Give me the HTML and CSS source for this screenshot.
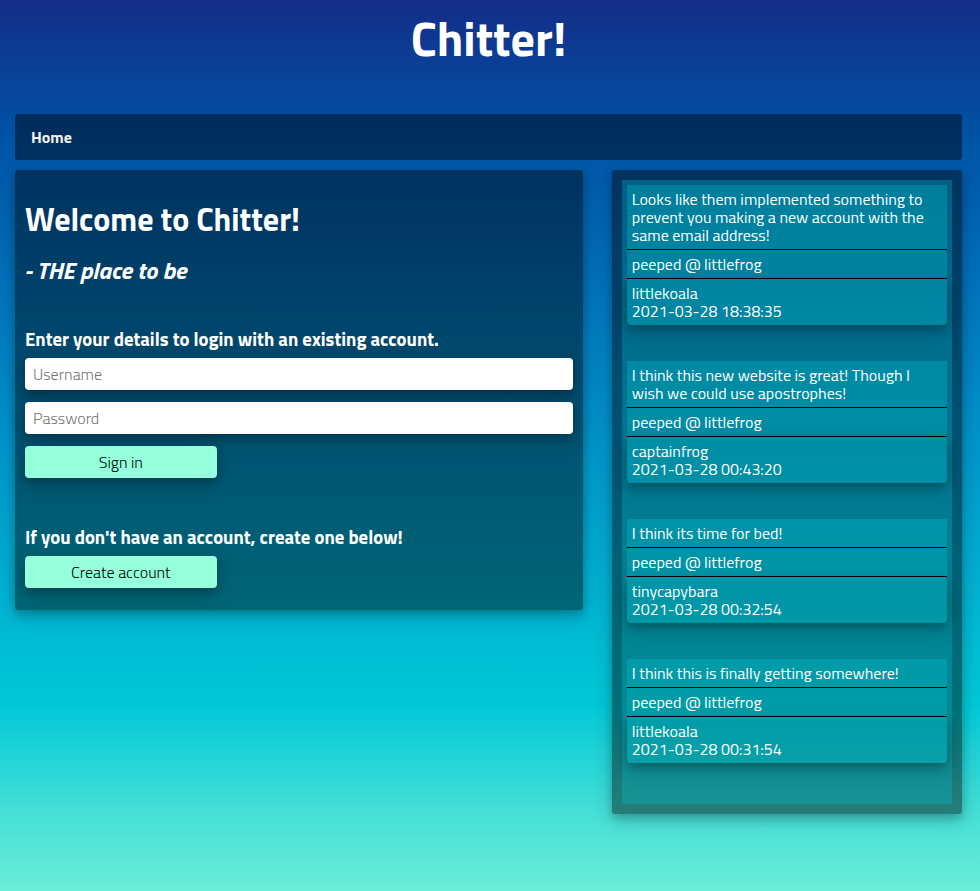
FILE: index.html
```html
<!DOCTYPE html>
<html lang="en">
<head>
<meta charset="utf-8">
<meta name="viewport" content="width=device-width, initial-scale=1">
<title>Chitter!</title>
<link rel="stylesheet" href="styles.css">
</head>
<body>
<header class="banner"><h1>Chitter!</h1></header>
<nav class="navbar"><a href="#">Home</a></nav>
<main class="columns">
  <section class="panel welcome">
    <h2>Welcome to Chitter!</h2>
    <p class="tagline">- THE place to be</p>
    <form class="form">
      <h3>Enter your details to login with an existing account.</h3>
      <input class="field" type="text" placeholder="Username" aria-label="Username">
      <input class="field" type="password" placeholder="Password" aria-label="Password">
      <button class="button" type="submit">Sign in</button>
    </form>
    <form class="form">
      <h3>If you don't have an account, create one below!</h3>
      <button class="button" type="submit">Create account</button>
    </form>
  </section>
  <section class="panel" aria-label="Peeps">
    <div class="feed">
      <article class="peep">
        <p class="cell">Looks like them implemented something to prevent you making a new account with the same email address!</p>
        <p class="cell">peeped @ littlefrog</p>
        <p class="cell meta">littlekoala<br>2021-03-28 18:38:35</p>
      </article>
      <article class="peep">
        <p class="cell">I think this new website is great! Though I wish we could use apostrophes!</p>
        <p class="cell">peeped @ littlefrog</p>
        <p class="cell meta">captainfrog<br>2021-03-28 00:43:20</p>
      </article>
      <article class="peep">
        <p class="cell">I think its time for bed!</p>
        <p class="cell">peeped @ littlefrog</p>
        <p class="cell meta">tinycapybara<br>2021-03-28 00:32:54</p>
      </article>
      <article class="peep">
        <p class="cell">I think this is finally getting somewhere!</p>
        <p class="cell">peeped @ littlefrog</p>
        <p class="cell meta">littlekoala<br>2021-03-28 00:31:54</p>
      </article>
    </div>
  </section>
</main>
</body>
</html>
```
FILE: styles.css
```css
* {
  box-sizing: border-box;
  margin: 0;
}

html {
  background: linear-gradient(#142d88 0%, #0052a5 15%, #0073bc 32%, #0096cc 50%, #00c8d7 79%, #44dfd7 91%, #6cedd9 100%);
}

body {
  min-height: 100vh;
  padding: 0 18px 0 15px;
  color: #fff;
  font-family: "Titillium Web", Roboto, sans-serif;
  font-size: 16px;
  line-height: 18px;
}

.banner {
  padding: 11px 0 47px;
  text-align: center;
}

.banner h1 {
  font-size: 48px;
  line-height: 56px;
}

.navbar {
  padding: 14px 16px;
  border-radius: 3px;
  background: rgba(0, 0, 0, 0.43);
}

.navbar a {
  color: #f2f2f2;
  font-weight: 700;
  text-decoration: none;
}

.columns {
  display: grid;
  grid-template-columns: 60fr 37fr;
  align-items: start;
  gap: 29px;
  margin-top: 10px;
}

.panel {
  padding: 10px;
  border-radius: 3px;
  background: rgba(0, 0, 0, 0.44);
  box-shadow: 0 4px 8px rgba(0, 0, 0, 0.2), 0 6px 20px rgba(0, 0, 0, 0.19);
}

.welcome {
  padding: 29px 10px 22px;
}

.welcome h2 {
  font-size: 32px;
  line-height: 40px;
}

.tagline {
  margin-top: 16px;
  font-size: 24px;
  font-style: italic;
  font-weight: 700;
  line-height: 30px;
}

.form {
  display: flex;
  flex-direction: column;
  align-items: flex-start;
  gap: 12px;
  margin-top: 42px;
}

.form + .form {
  margin-top: 47px;
}

.form h3 {
  margin-bottom: -6px;
  line-height: 25px;
}

.field,
.button {
  height: 32px;
  border: 0;
  border-radius: 4px;
  font: inherit;
  font-weight: 300;
  box-shadow: 0 4px 8px rgba(0, 0, 0, 0.2), 0 6px 20px rgba(0, 0, 0, 0.19);
}

.field {
  width: 100%;
  padding: 0 8px;
  background: #fff;
}

.field::placeholder {
  color: #757575;
}

.button {
  width: 35%;
  background: #95ffdc;
  color: #000;
}

.feed {
  display: grid;
  gap: 36px;
  padding: 5px 5px 41px;
  background: rgba(0, 200, 215, 0.3);
}

.cell {
  padding: 5px;
  border-bottom: 1px solid #000;
  background: rgba(0, 200, 215, 0.3);
}

.meta {
  border-bottom: 0;
  border-radius: 0 0 4px 4px;
  box-shadow: 0 4px 8px rgba(0, 0, 0, 0.2), 0 6px 20px rgba(0, 0, 0, 0.19);
}
```
